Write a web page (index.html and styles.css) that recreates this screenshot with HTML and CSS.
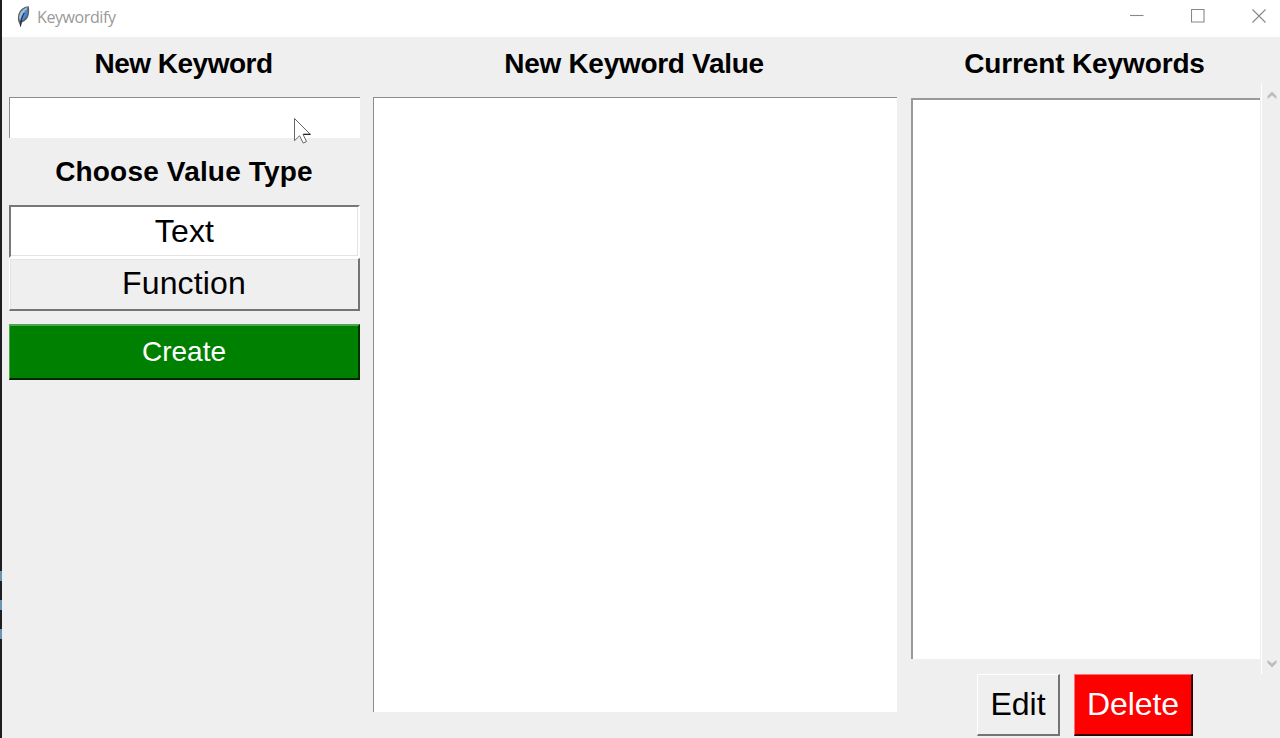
FILE: index.html
```html
<!DOCTYPE html>
<html lang="en">
<head>
<meta charset="utf-8">
<title>Keywordify</title>
<link rel="stylesheet" href="styles.css">
</head>
<body>
<div class="desktop-edge"><i class="mark"></i><i class="mark"></i><i class="mark"></i></div>
<div class="window">
  <header class="titlebar">
    <svg class="feather" width="14" height="22" viewBox="0 0 14 22">
      <path d="M12.700 .3C7.500 .3 2.700 4.500 2 10.500c-.3 2.500 0 4.500.8 5.900l1.700 4.300 1.500-4.300c3.300-1.400 6-3.700 6.700-7.700.6-3 .7-5.800 0-8.400z" fill="#596069"/>
      <path d="M11.600 1.300C7 2.500 3.500 6.500 3 11.500l.8 3.200L10.800 4z" fill="#a3bdd4"/>
      <path d="M11.500 2.800c.5 5.200-1 9.200-6 12l-1.200-1.300C5.500 9 8 5 11.500 2.800z" fill="#4a88d8"/>
      <path d="M8.300 7C6.300 10 5 14 4.500 20.500" fill="none" stroke="#17202b" stroke-width="1"/>
    </svg>
    <span class="title">Keywordify</span>
    <div class="controls">
      <svg width="14" height="14" viewBox="0 0 14 14"><path d="M0 6.500h13.500"/></svg>
      <svg width="14" height="14" viewBox="0 0 14 14"><path d="M.5.500h12.500v12.500H.5z"/></svg>
      <svg width="14" height="14" viewBox="0 0 14 14"><path d="M.5.500l13 13M13.500.500l-13 13"/></svg>
    </div>
  </header>
  <main class="content">
    <section class="column create-column">
      <h2 class="heading new-heading">New Keyword</h2>
      <div class="field keyword-field"></div>
      <h2 class="heading type-heading">Choose Value Type</h2>
      <div class="button option selected"><span>Text</span></div>
      <div class="button option"><span>Function</span></div>
      <div class="button create"><span>Create</span></div>
    </section>
    <section class="column value-column">
      <h2 class="heading value-heading">New Keyword Value</h2>
      <div class="field value-field"></div>
    </section>
    <section class="column list-column">
      <h2 class="heading current-heading">Current Keywords</h2>
      <div class="field list-field"></div>
      <div class="actions">
        <div class="button edit"><span>Edit</span></div>
        <div class="button delete"><span>Delete</span></div>
      </div>
    </section>
    <div class="scrollbar">
      <svg width="10" height="9" viewBox="0 0 10 9"><path d="M.5 8V5L5 .5 9.500 5v3L5 4.500z"/></svg>
      <svg width="10" height="9" viewBox="0 0 10 9"><path d="M.5 1v3L5 8.500 9.500 4V1L5 4.500z"/></svg>
    </div>
  </main>
</div>
<svg class="pointer" width="18" height="27" viewBox="0 0 18 27">
  <path d="M.5.500v22.200l5-4.900 3.800 7.300 3.200-1.600-3.500-7.200h7.300z" fill="#fff" stroke="#666" stroke-width="1"/>
  <path d="M9.500 16.300h7" stroke="#111" stroke-width="1"/>
</svg>
</body>
</html>
```
FILE: styles.css
```css
* { box-sizing: border-box; }
body {
  margin: 0;
  height: 738px;
  overflow: hidden;
  display: flex;
  background: #efefef;
  color: #000;
  font-family: "Liberation Sans", Arial, sans-serif;
}
.desktop-edge {
  width: 2px;
  background: #1e1e20;
  padding-top: 571px;
  display: flex;
  flex-direction: column;
  gap: 19px;
}
.mark { height: 10px; background: #6895b4; }
.window { flex: 1; display: flex; flex-direction: column; }
.titlebar {
  height: 37px;
  background: #fff;
  display: flex;
  align-items: flex-start;
  padding: 6px 14px 0 14px;
}
.title {
  margin: 0 0 0 7px;
  font: 16px/23px "Open Sans", "Noto Sans", sans-serif;
  letter-spacing: -0.4px;
  color: #999;
}
.controls { margin: 3px 0 0 auto; display: flex; gap: 47px; }
.controls svg { fill: none; stroke: #888; stroke-width: 1.1; }
.content {
  flex: 1;
  display: grid;
  grid-template-columns: 351px 537px 364px 19px;
  padding-left: 7px;
}
.value-column { margin-left: 13px; }
.list-column { margin-left: 14px; }
.column { display: flex; flex-direction: column; }
.heading {
  margin: 0;
  height: 60px;
  padding-top: 11px;
  font-size: 28px;
  line-height: 32px;
  font-weight: bold;
  text-align: center;
  white-space: nowrap;
}
.new-heading { letter-spacing: -0.5px; padding-right: 2px; }
.value-heading { letter-spacing: -0.3px; padding-right: 2px; }
.current-heading { letter-spacing: -0.13px; padding-right: 3px; }
.field {
  background: #fff;
  border-top: 1px solid #8c8c8c;
  border-left: 1px solid #8c8c8c;
}
.keyword-field { height: 41px; }
.type-heading { height: 67px; padding: 18px 1px 0 0; letter-spacing: 0.18px; }
.value-field { height: 615px; }
.button {
  display: flex;
  align-items: center;
  justify-content: center;
  font-size: 32px;
  line-height: 36px;
  border: 2px solid;
}
.option {
  height: 53px;
  background: #efefef;
  border-width: 1px 2px 2px 1px;
  border-color: #fff #747474 #747474 #fff;
  box-shadow: inset 1px 1px #e3e3e3;
  padding-bottom: 3px;
}
.option span { letter-spacing: 0.15px; }
.option.selected {
  background: #fff;
  border-width: 2px;
  border-color: #777 #fff #fff #777;
  box-shadow: inset -1px -1px #e3e3e3;
  padding-bottom: 2px;
}
.create {
  height: 56px;
  margin-top: 13px;
  background: #008000;
  color: #fff;
  font-size: 28px;
  border-width: 2px 2px 2px 1px;
  border-color: #4fa64f #002f00 #002600 #4fa64f;
}
.list-column .heading { height: 61px; }
.list-field { height: 561px; border-width: 2px 0 0 2px; border-color: #999; margin-right: 1px; }
.actions { display: flex; gap: 14px; margin: 15px 0 0 66px; }
.actions .button { height: 62px; padding-bottom: 1px; border-width: 1px 2px 2px 1px; }
.edit { width: 83px; border-color: #fff #747474 #747474 #fff; }
.delete { width: 119px; background: #f00; color: #fff; border-color: #ff7070 #300 #300 #ff7070; }
.delete span { letter-spacing: -0.1px; }
.scrollbar {
  margin-top: 46px;
  height: 591px;
  border-left: 1px solid #fff;
  display: flex;
  flex-direction: column;
  justify-content: space-between;
  align-items: center;
  padding: 8px 0 6px 2px;
}
.scrollbar svg { fill: #bdbdbd; }
.pointer { position: absolute; left: 294px; top: 118px; }
```
